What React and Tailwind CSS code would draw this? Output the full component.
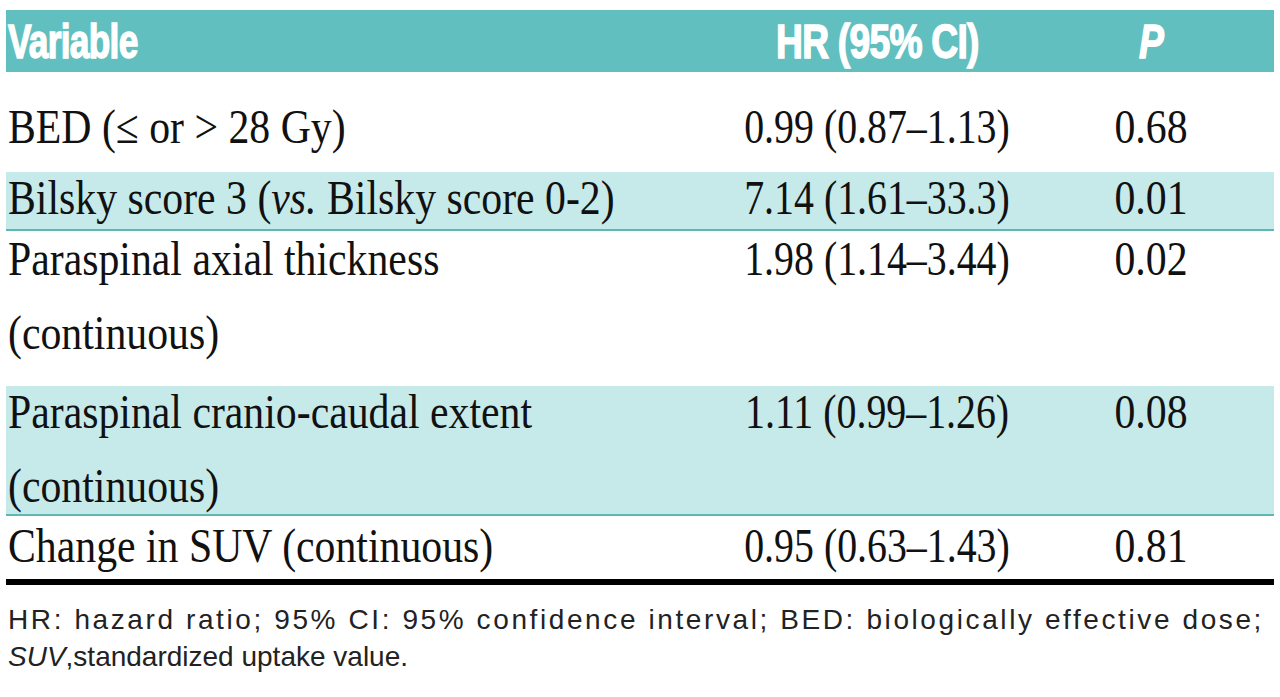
const rows = [
  { lines: ['BED (≤ or > 28 Gy)'], hr: '0.99 (0.87–1.13)', p: '0.68', shade: false, h: 'h-[100px] pt-[29px]' },
  {
    lines: [
      <>Bilsky score 3 (<i>vs.</i> Bilsky score 0-2)</>,
    ],
    hr: '7.14 (1.61–33.3)',
    p: '0.01',
    shade: true,
    h: 'h-[59px] pt-[0px]',
  },
  {
    lines: ['Paraspinal axial thickness', '(continuous)'],
    hr: '1.98 (1.14–3.44)',
    p: '0.02',
    shade: false,
    h: 'h-[155px] pt-[2px]',
  },
  {
    lines: ['Paraspinal cranio-caudal extent', '(continuous)'],
    hr: '1.11 (0.99–1.26)',
    p: '0.08',
    shade: true,
    h: 'h-[130px] pt-[0px]',
  },
  { lines: ['Change in SUV (continuous)'], hr: '0.95 (0.63–1.43)', p: '0.81', shade: false, h: 'h-[63px] pt-[4px]' },
];

function Cond({ children, origin = 'origin-left', scale = 'scale-x-[0.87]' }) {
  return (
    <span className={`inline-block whitespace-nowrap ${scale} ${origin}`}>{children}</span>
  );
}

export default function App() {
  return (
    <div className="w-[1280px] h-[697px] bg-white overflow-hidden pt-[10px] px-[6px] text-[#111]">
      {/* header */}
      <div
        className="grid grid-cols-[734px_274px_1fr] h-[62px] items-center bg-[#62bfbf] text-white font-bold text-[49px] leading-none [-webkit-text-stroke:1.5px_white]"
        style={{ fontFamily: '"Liberation Sans", Arial, sans-serif' }}
      >
        <div className="pl-[2px]">
          <span className="inline-block scale-x-[0.72] origin-left tracking-[-1px]">Variable</span>
        </div>
        <div className="flex justify-center">
          <span className="inline-block whitespace-nowrap scale-x-[0.76] origin-center tracking-[-1px]">HR (95% CI)</span>
        </div>
        <div className="flex justify-center pl-[14px]">
          <span className="inline-block scale-x-[0.76] origin-center italic">P</span>
        </div>
      </div>

      {/* body */}
      <div
        className="text-[48px]"
        style={{ fontFamily: '"Liberation Serif", "Times New Roman", serif' }}
      >
        {rows.map((r, i) => (
          <div
            key={i}
            className={`grid grid-cols-[734px_274px_1fr] items-start ${r.h} ${
              r.shade ? 'bg-[#c6eaea] border-b-2 border-[#5db7b4]' : ''
            }`}
          >
            <div className="pl-[2px]">
              {r.lines.map((l, j) => (
                <div key={j} className="h-[74px] leading-[52px]">
                  <Cond>{l}</Cond>
                </div>
              ))}
            </div>
            <div className="flex justify-center leading-[52px]">
              <Cond origin="origin-center" scale="scale-x-[0.83]">{r.hr}</Cond>
            </div>
            <div className="flex justify-center pl-[14px] leading-[52px]">
              <Cond origin="origin-center">{r.p}</Cond>
            </div>
          </div>
        ))}
      </div>
      <div className="h-[6px] bg-black" />

      {/* footnote */}
      <div
        className="pt-[16px] pl-[2px] text-[28px] leading-[37px] text-[#222] whitespace-nowrap"
        style={{ fontFamily: '"Liberation Sans", Arial, sans-serif' }}
      >
        <div className="tracking-[2.6px]">HR: hazard ratio; 95% CI: 95% confidence interval; BED: biologically effective dose;</div>
        <div>
          <i>SUV</i>,standardized uptake value.
        </div>
      </div>
    </div>
  );
}
